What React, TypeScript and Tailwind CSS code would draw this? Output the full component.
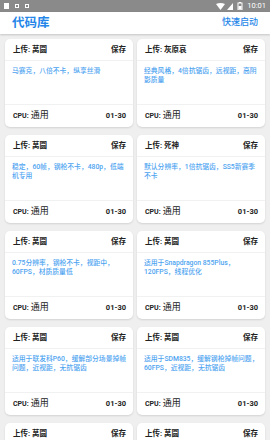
import React from "react";

type Card = { user: string; lines: string[] };

const cards: Card[] = [
  { user: "莴圆", lines: ["马赛克，八倍不卡，纵享丝滑"] },
  { user: "灰原哀", lines: ["经典风格，4倍抗锯齿，远视距，高阴", "影质量"] },
  { user: "莴圆", lines: ["稳定，60帧，钢枪不卡，480p，低端", "机专用"] },
  { user: "死神", lines: ["默认分辨率，1倍抗锯齿，SS5新赛季", "不卡"] },
  { user: "莴圆", lines: ["0.75分辨率，钢枪不卡，视距中，", "60FPS，材质质量低"] },
  { user: "莴圆", lines: ["适用于Snapdragon 855Plus，", "120FPS，线程优化"] },
  { user: "莴圆", lines: ["适用于联发科P60，缓解部分场景掉帧", "问题，近视距，无抗锯齿"] },
  { user: "莴圆", lines: ["适用于SDM835，缓解钢枪掉帧问题，", "60FPS，近视距，无抗锯齿"] },
  { user: "莴圆", lines: [""] },
  { user: "莴圆", lines: [""] },
];

function CardView({ c }: { c: Card }) {
  return (
    <div className="flex h-[88px] flex-col rounded-[5px] bg-white shadow-[0_1px_2px_rgba(0,0,0,0.12)]">
      <div className="flex h-[22px] items-center justify-between border-b border-[#f1f1f1] pl-[8px] pr-[7px] text-[7.5px] font-bold text-[#222]">
        <span>上传: {c.user}</span>
        <span>保存</span>
      </div>
      <div className="h-[44px] border-b border-[#f1f1f1] pl-[7px] pt-[6px] text-[6.8px] font-medium leading-[9px] text-[#4ea4f0]">
        {c.lines.map((l, i) => (
          <div key={i} className="whitespace-nowrap">
            {l}
          </div>
        ))}
      </div>
      <div className="flex h-[22px] items-center justify-between pl-[8px] pr-[7px] text-[#222]">
        <span className="flex items-center">
          <span className="text-[7px] font-bold">CPU:</span>
          <span className="ml-[2px] text-[9px]">通用</span>
        </span>
        <span className="text-[7.5px] font-bold">01-30</span>
      </div>
    </div>
  );
}

export default function App() {
  return (
    <div
      className="h-[440px] w-[270px] overflow-hidden bg-[#efefef]"
      style={{ fontFamily: "Roboto, 'Noto Sans CJK SC', sans-serif" }}
    >
      <div className="flex h-[12px] items-center justify-between bg-[#8a8a8a] px-[4px] text-white">
        <div className="flex items-center gap-[6px]">
          <div className="h-[6px] w-[5px] bg-white" />
          <div className="flex h-[4px] w-[4px] items-center justify-center border border-white" />
          <div className="flex h-[4px] w-[4px] items-center justify-center border border-white" />
        </div>
        <div className="flex items-center gap-[2px]">
          <svg width="9" height="7" viewBox="0 0 9 7">
            <path d="M0 1 Q4.5 -1 9 1 L4.5 7 Z" fill="white" />
          </svg>
          <svg width="6" height="7" viewBox="0 0 6 7">
            <path d="M6 0 L6 7 L0 7 Z" fill="white" />
          </svg>
          <svg width="6" height="8" viewBox="0 0 6 8" className="ml-[2px]">
            <rect x="1" y="1" width="4" height="7" fill="none" stroke="white" strokeWidth="1" />
            <rect x="2" y="0" width="2" height="1" fill="white" />
            <rect x="1.5" y="4" width="3" height="3.5" fill="white" />
          </svg>
          <span className="ml-[2px] text-[7.5px] leading-none">10:01</span>
        </div>
      </div>
      <div className="relative z-10 flex h-[22px] items-center justify-between bg-white pl-[12px] pr-[12px] shadow-[0_1px_2px_rgba(0,0,0,0.18)]">
        <span className="text-[12.5px] font-bold text-[#2486e8]">代码库</span>
        <span className="text-[9px] font-medium text-[#2486e8]">快速启动</span>
      </div>
      <div className="grid grid-cols-2 gap-x-[4px] gap-y-[8px] px-[5px] pt-[5px]">
        {cards.map((c, i) => (
          <CardView key={i} c={c} />
        ))}
      </div>
    </div>
  );
}
